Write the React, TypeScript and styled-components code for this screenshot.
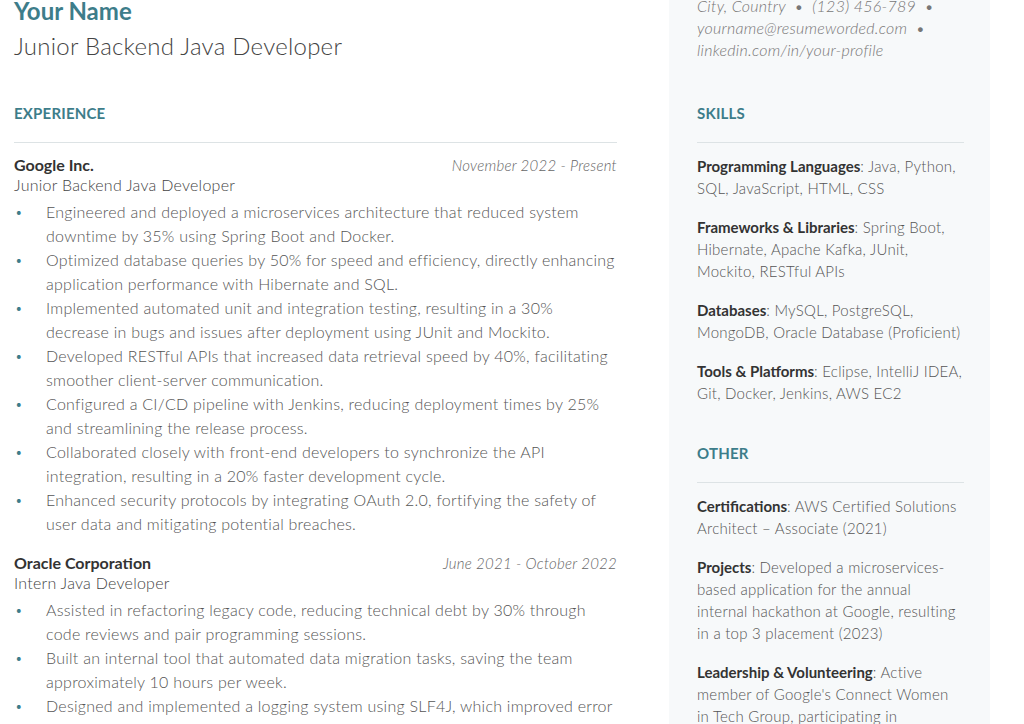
import React from "react";
import styled, { createGlobalStyle } from "styled-components";

const Global = createGlobalStyle`
  html, body { margin: 0; padding: 0; background: #fff; overflow: hidden; }
  body { font-family: Lato, "Open Sans", sans-serif; color: #555; letter-spacing: 0.25px; }
`;

const Page = styled.div`
  display: flex;
  margin-top: -8px;
  padding-left: 14px;
  width: 1024px;
  box-sizing: border-box;
`;
const Main = styled.div`
  width: 603px;
  flex: none;
`;
const Side = styled.div`
  margin-left: 52px;
  width: 321px;
  background: #f7f9fa;
  padding: 0 26px 0 28px;
  box-sizing: border-box;
  min-height: 760px;
`;
const Name = styled.div`
  font-size: 24px; font-weight: 700; color: #3d7d8a; line-height: 30px;
  padding-top: 4px; letter-spacing: 0;
`;
const Title = styled.div`
  font-size: 24px; font-weight: 300; color: #444; line-height: 30px; margin-top: 5px;
`;
const Contact = styled.div`
  font-size: 16px; font-style: italic; font-weight: 300; color: #777; line-height: 22px;
  padding-top: 3px; height: 104px;
`;
const SectionHead = styled.div<{ $top: number }>`
  margin-top: ${p => p.$top}px;
  font-size: 15px; font-weight: 700; color: #3d7d8a; letter-spacing: 0.2px;
  line-height: 20px; padding-bottom: 19px; border-bottom: 1px solid #dde3e5; margin-bottom: 12px;
`;
const JobHead = styled.div<{ $first?: boolean }>`
  display: flex; justify-content: space-between; align-items: baseline;
  margin-top: ${p => (p.$first ? 0 : 17)}px; line-height: 20px;
`;
const Company = styled.span` font-size: 16px; font-weight: 700; color: #333; letter-spacing: 0; `;
const Dates = styled.span` font-size: 15px; font-style: italic; font-weight: 300; color: #666; `;
const Role = styled.div` font-size: 16px; font-weight: 300; color: #444; line-height: 20px; margin-bottom: 5px; `;
const List = styled.ul` margin: 0; padding: 0; list-style: none; `;
const Item = styled.li`
  position: relative; padding-left: 32px; font-size: 16px; font-weight: 300; color: #555; line-height: 24px;
  &::before { content: "•"; position: absolute; left: 1px; top: 0; color: #3d7d8a; font-size: 13px; }
`;
const Para = styled.p`
  margin: 0 0 17px; font-size: 15px; font-weight: 300; color: #555; line-height: 22px;
  b { font-weight: 700; color: #333; letter-spacing: 0; }
`;

const jobs = [
  { c: "Google Inc.", d: "November 2022 - Present", r: "Junior Backend Java Developer", b: [
    "Engineered and deployed a microservices architecture that reduced system downtime by 35% using Spring Boot and Docker.",
    "Optimized database queries by 50% for speed and efficiency, directly enhancing application performance with Hibernate and SQL.",
    "Implemented automated unit and integration testing, resulting in a 30% decrease in bugs and issues after deployment using JUnit and Mockito.",
    "Developed RESTful APIs that increased data retrieval speed by 40%, facilitating smoother client-server communication.",
    "Configured a CI/CD pipeline with Jenkins, reducing deployment times by 25% and streamlining the release process.",
    "Collaborated closely with front-end developers to synchronize the API integration, resulting in a 20% faster development cycle.",
    "Enhanced security protocols by integrating OAuth 2.0, fortifying the safety of user data and mitigating potential breaches.",
  ]},
  { c: "Oracle Corporation", d: "June 2021 - October 2022", r: "Intern Java Developer", b: [
    "Assisted in refactoring legacy code, reducing technical debt by 30% through code reviews and pair programming sessions.",
    "Built an internal tool that automated data migration tasks, saving the team approximately 10 hours per week.",
    "Designed and implemented a logging system using SLF4J, which improved error tracking and reduced debugging time by 20%.",
  ]},
];

export default function App() {
  return (
    <>
      <Global />
      <Page>
        <Main>
          <Name>Your Name</Name>
          <Title>Junior Backend Java Developer</Title>
          <SectionHead $top={42}>EXPERIENCE</SectionHead>
          {jobs.map((j, i) => (
            <div key={j.c}>
              <JobHead $first={i === 0}><Company>{j.c}</Company><Dates>{j.d}</Dates></JobHead>
              <Role>{j.r}</Role>
              <List>{j.b.map(t => <Item key={t}>{t}</Item>)}</List>
            </div>
          ))}
        </Main>
        <Side>
          <Contact>
            City, Country&nbsp; •&nbsp; (123) 456-789&nbsp; •<br />
            yourname@resumeworded.com&nbsp; •<br />
            linkedin.com/in/your-profile
          </Contact>
          <SectionHead $top={4}>SKILLS</SectionHead>
          <Para><b>Programming Languages</b>: Java, Python, SQL, JavaScript, HTML, CSS</Para>
          <Para><b>Frameworks &amp; Libraries</b>: Spring Boot, Hibernate, Apache Kafka, JUnit, Mockito, RESTful APIs</Para>
          <Para><b>Databases</b>: MySQL, PostgreSQL, MongoDB, Oracle Database (Proficient)</Para>
          <Para><b>Tools &amp; Platforms</b>: Eclipse, IntelliJ IDEA, Git, Docker, Jenkins, AWS EC2</Para>
          <SectionHead $top={39}>OTHER</SectionHead>
          <Para><b>Certifications</b>: AWS Certified Solutions Architect – Associate (2021)</Para>
          <Para><b>Projects</b>: Developed a microservices-based application for the annual internal hackathon at Google, resulting in a top 3 placement (2023)</Para>
          <Para><b>Leadership &amp; Volunteering</b>: Active member of Google's Connect Women in Tech Group, participating in mentoring</Para>
        </Side>
      </Page>
    </>
  );
}
